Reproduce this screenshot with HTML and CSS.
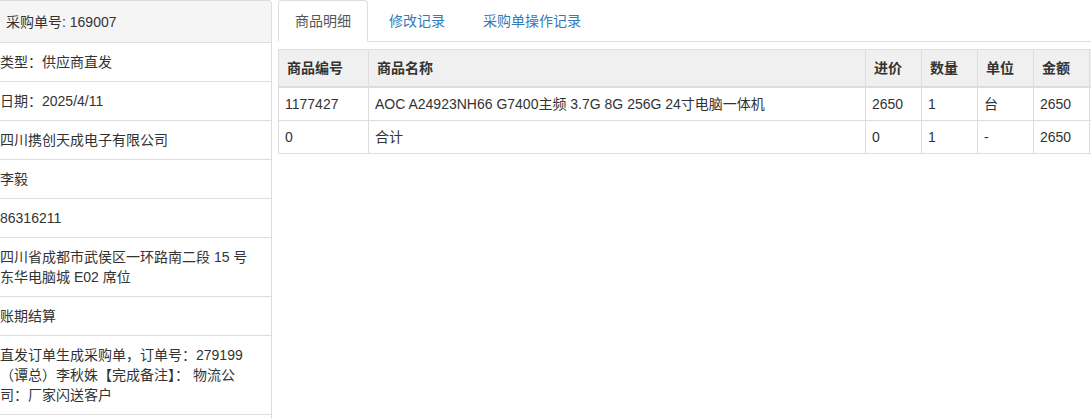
FILE: index.html
```html
<!DOCTYPE html>
<html>
<head>
<meta charset="utf-8">
<link rel="stylesheet" href="styles.css">
</head>
<body>
  <div class="page">
    <!-- order info -->
    <div class="info-panel">
      <div class="info-heading">采购单号: 169007</div>
      <div class="info-item">类型：供应商直发</div>
      <div class="info-item">日期：2025/4/11</div>
      <div class="info-item">四川携创天成电子有限公司</div>
      <div class="info-item">李毅</div>
      <div class="info-item">86316211</div>
      <div class="info-item">四川省成都市武侯区一环路南二段 15 号东华电脑城 E02 席位</div>
      <div class="info-item">账期结算</div>
      <div class="info-item">直发订单生成采购单，订单号：279199（谭总）李秋姝【完成备注】： 物流公司：厂家闪送客户</div>
      <div class="info-item">&nbsp;</div>
    </div>

    <!-- goods tabs -->
    <div class="detail">
      <ul class="tabs">
        <li class="active"><a href="#">商品明细</a></li>
        <li><a href="#">修改记录</a></li>
        <li><a href="#">采购单操作记录</a></li>
      </ul>
      <table class="goods">
        <colgroup>
          <col class="c-code">
          <col class="c-name">
          <col class="c-num">
          <col class="c-num">
          <col class="c-num">
          <col class="c-num">
          <col class="c-op">
        </colgroup>
        <thead>
          <tr>
            <th>商品编号</th>
            <th>商品名称</th>
            <th>进价</th>
            <th>数量</th>
            <th>单位</th>
            <th>金额</th>
            <th></th>
          </tr>
        </thead>
        <tbody>
          <tr>
            <td>1177427</td>
            <td>AOC A24923NH66 G7400主频 3.7G 8G 256G 24寸电脑一体机</td>
            <td>2650</td>
            <td>1</td>
            <td>台</td>
            <td>2650</td>
            <td></td>
          </tr>
          <tr>
            <td>0</td>
            <td>合计</td>
            <td>0</td>
            <td>1</td>
            <td>-</td>
            <td>2650</td>
            <td></td>
          </tr>
        </tbody>
      </table>
    </div>
  </div>
</body>
</html>
```

FILE: styles.css
```css
html, body {
  margin: 0;
  padding: 0;
  overflow: hidden;
  background-color: #ffffff;
}

body {
  font-family: "Liberation Sans", Arial, "Noto Sans CJK SC", sans-serif;
  font-size: 14px;
  line-height: 20px;
  color: #333333;
}

.page {
  display: flex;
  align-items: flex-start;
}

/* left panel, its left edge runs off the page */
.info-panel {
  flex: 0 0 288px;
  margin-left: -16px;
  border: 1px solid #dddddd;
  border-bottom: none;
  border-radius: 0 4px 0 0;
  box-sizing: border-box;
}

.info-heading {
  padding: 11px 15px 10px 21px;
  background-color: #f5f5f5;
  border-bottom: 1px solid #dddddd;
  border-radius: 0 3px 0 0;
}

.info-item {
  padding: 9px 15px;
  border-bottom: 1px solid #dddddd;
}

.detail {
  flex: 0 0 auto;
  margin-left: 6px;
}

.tabs {
  display: flex;
  list-style: none;
  margin: 0;
  padding: 0;
  border-bottom: 1px solid #dddddd;
  width: 900px;
}

.tabs li {
  margin-right: 4px;
  margin-bottom: -1px;
}

.tabs a {
  display: block;
  padding: 10px 16px;
  border: 1px solid transparent;
  border-radius: 4px 4px 0 0;
  color: #337ab7;
  text-decoration: none;
}

.tabs .active a {
  color: #555555;
  background-color: #ffffff;
  border-color: #dddddd;
  border-bottom-color: transparent;
}

.goods {
  margin-top: 7px;
  border-collapse: collapse;
  table-layout: fixed;
  width: 891px;
}

.c-code { width: 90px; }
.c-name { width: 497px; }
.c-num { width: 56px; }
.c-op { width: 80px; }

.goods th,
.goods td {
  border: 1px solid #dddddd;
  text-align: left;
  white-space: nowrap;
  overflow: hidden;
}

.goods th {
  padding: 8px;
  font-weight: bold;
  background-color: #f0f0f0;
  border-bottom-width: 2px;
}

.goods td {
  padding: 6px;
}
```
